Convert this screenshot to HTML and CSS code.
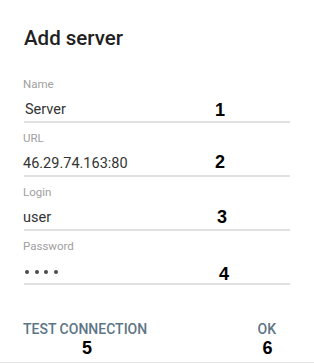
FILE: index.html
```html
<!DOCTYPE html>
<html lang="en">
<head>
  <meta charset="UTF-8">
  <meta name="viewport" content="width=device-width, initial-scale=1.0">
  <title>Add server</title>
  <link rel="stylesheet" href="styles.css">
</head>
<body>
  <div class="dialog">
    <h1 class="dialog-title">Add server</h1>

    <div class="field">
      <label class="field-label">Name</label>
      <div class="field-value name-value">Server</div>
      <span class="marker marker-1">1</span>
    </div>
    <div class="field">
      <label class="field-label">URL</label>
      <div class="field-value">46.29.74.163:80</div>
      <span class="marker marker-2">2</span>
    </div>
    <div class="field">
      <label class="field-label">Login</label>
      <div class="field-value">user</div>
      <span class="marker marker-3">3</span>
    </div>
    <div class="field">
      <label class="field-label">Password</label>
      <div class="field-value password-value">
        <span class="dot"></span><span class="dot"></span><span class="dot"></span><span class="dot"></span>
      </div>
      <span class="marker marker-4">4</span>
    </div>

    <div class="dialog-actions">
      <div class="action">
        <button class="action-btn">TEST CONNECTION</button>
        <span class="marker marker-5">5</span>
      </div>
      <div class="action">
        <button class="action-btn">OK</button>
        <span class="marker marker-6">6</span>
      </div>
    </div>
  </div>
</body>
</html>
```

FILE: styles.css
```css
* {
  box-sizing: border-box;
}

body {
  margin: 0;
  background-color: #ffffff;
  font-family: Roboto, "Noto Sans", Arial, sans-serif;
}

.dialog {
  width: 314px;
  height: 363px;
  padding: 26px 24px 0 23px;
  border-bottom: 1px solid #e4e4e4;
}

.dialog-title {
  margin: 0 0 27px 1px;
  font-size: 20.5px;
  line-height: 24px;
  font-weight: 500;
  color: #212121;
}

.field {
  position: relative;
  margin-bottom: 8px;
  border-bottom: 2px solid #e0e0e0;
  margin-left: 1px;
}

.field-label {
  display: block;
  font-size: 11.5px;
  line-height: 14px;
  color: #a0a0a0;
  margin-left: -1px;
}

.field-value {
  margin-top: 9px;
  margin-bottom: 1px;
  font-size: 14.5px;
  line-height: 20px;
  height: 20px;
  color: #333333;
  margin-left: -1px;
}

.name-value {
  margin-left: 1px;
}

.password-value {
  display: flex;
  align-items: center;
  gap: 5.5px;
  padding-left: 2px;
}

.dot {
  width: 4px;
  height: 4px;
  border-radius: 50%;
  background-color: #4a4a4a;
}

.marker {
  position: absolute;
  font-family: "Liberation Sans", Arial, sans-serif;
  font-weight: bold;
  font-size: 18px;
  line-height: 18px;
  color: #000000;
}

.marker-1 { left: 191px; top: 24px; }
.marker-2 { left: 191px; top: 22px; }
.marker-3 { left: 193px; top: 23px; }
.marker-4 { left: 195px; top: 26px; }

.dialog-actions {
  display: flex;
  justify-content: space-between;
  margin-top: 34px;
  padding-right: 14px;
}

.action {
  position: relative;
}

.action-btn {
  background: none;
  border: none;
  padding: 0;
  font-family: Roboto, "Noto Sans", Arial, sans-serif;
  font-size: 14px;
  line-height: 16px;
  font-weight: 500;
  color: #5d7585;
  cursor: pointer;
}

.marker-5 { left: 59px; top: 20px; }
.marker-6 { left: 5px; top: 20px; }
```
